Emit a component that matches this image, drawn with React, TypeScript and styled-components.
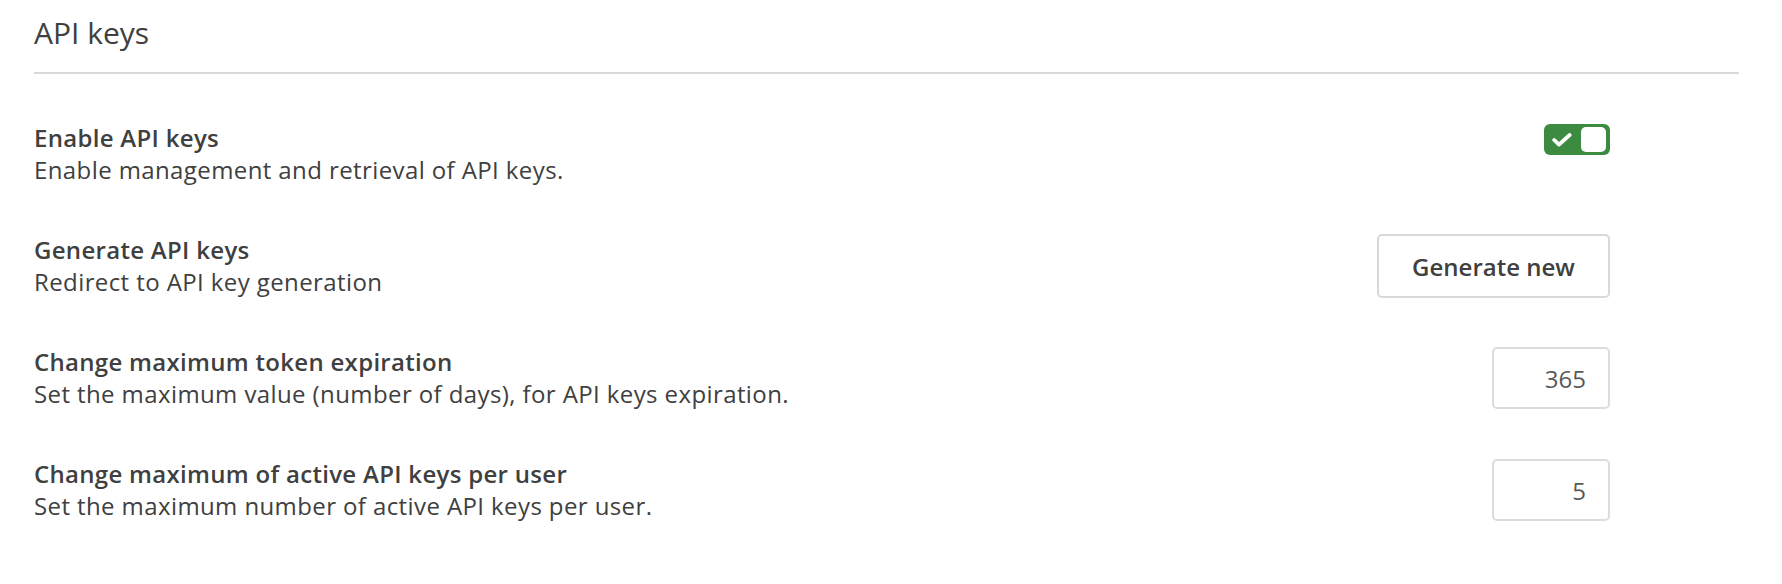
import React, { useState } from "react";
import styled, { createGlobalStyle } from "styled-components";

const GlobalStyle = createGlobalStyle`
  html, body {
    margin: 0;
    padding: 0;
    background: #ffffff;
  }
  body {
    font-family: "Source Sans Pro", "Open Sans", "Liberation Sans", sans-serif;
    color: #404040;
  }
`;

const Page = styled.div`
  width: 1705px;
  padding-left: 34px;
`;

const Header = styled.div`
  padding: 14px 0 20px;
  border-bottom: 2px solid #d9d9d9;
`;

const Title = styled.h1`
  margin: 0;
  font-size: 30px;
  line-height: 38px;
  font-weight: 400;
  color: #404040;
`;

const List = styled.div`
  display: flex;
  flex-direction: column;
  gap: 48px;
  padding: 48px 129px 0 0;
`;

const Row = styled.div<{ $align?: string }>`
  display: flex;
  justify-content: space-between;
  align-items: ${(p) => p.$align || "center"};
`;

const TextBlock = styled.div`
  display: flex;
  flex-direction: column;
`;

const Label = styled.div`
  font-size: 24px;
  line-height: 32px;
  font-weight: 600;
  letter-spacing: 0.3px;
  color: #404040;
`;

const Description = styled.div`
  font-size: 24px;
  line-height: 32px;
  letter-spacing: 0.4px;
  color: #404040;
`;

const Switch = styled.button<{ $on: boolean }>`
  display: flex;
  align-items: center;
  justify-content: space-between;
  box-sizing: border-box;
  width: 66px;
  height: 31px;
  margin-top: 2px;
  padding: 0 4px 0 8px;
  border: none;
  border-radius: 6px;
  background: ${(p) => (p.$on ? "#3d8a41" : "#bdbdbd")};
  cursor: pointer;
`;

const Knob = styled.span`
  display: block;
  width: 25px;
  height: 25px;
  border-radius: 5px;
  background: #ffffff;
`;

const GenerateButton = styled.button`
  box-sizing: border-box;
  width: 233px;
  height: 64px;
  border: 2px solid #d9d9d9;
  border-radius: 5px;
  background: #ffffff;
  font-family: inherit;
  font-size: 24px;
  font-weight: 600;
  color: #404040;
  cursor: pointer;
`;

const NumberInput = styled.input`
  box-sizing: border-box;
  width: 118px;
  height: 62px;
  padding: 0 22px 0 12px;
  border: 2px solid #dcdcdc;
  border-radius: 5px;
  background: #ffffff;
  font-family: inherit;
  font-size: 24px;
  color: #595959;
  text-align: right;
  outline: none;
`;

const CheckIcon = () => (
  <svg width="20" height="14" viewBox="0 0 20 14" fill="none">
    <path
      d="M2.2 7 L7 11.6 L17.6 2"
      stroke="#ffffff"
      strokeWidth="3.8"
      strokeLinecap="round"
      strokeLinejoin="round"
    />
  </svg>
);

const App: React.FC = () => {
  const [enabled, setEnabled] = useState(true);
  const [expiration, setExpiration] = useState("365");
  const [maxKeys, setMaxKeys] = useState("5");

  return (
    <>
      <GlobalStyle />
      <Page>
        <Header>
          <Title>API keys</Title>
        </Header>
        <List>
          <Row $align="flex-start">
            <TextBlock>
              <Label>Enable API keys</Label>
              <Description>Enable management and retrieval of API keys.</Description>
            </TextBlock>
            <Switch
              role="switch"
              aria-checked={enabled}
              $on={enabled}
              onClick={() => setEnabled(!enabled)}
            >
              {enabled ? <CheckIcon /> : <span />}
              <Knob />
            </Switch>
          </Row>
          <Row>
            <TextBlock>
              <Label>Generate API keys</Label>
              <Description>Redirect to API key generation</Description>
            </TextBlock>
            <GenerateButton>Generate new</GenerateButton>
          </Row>
          <Row>
            <TextBlock>
              <Label>Change maximum token expiration</Label>
              <Description>
                Set the maximum value (number of days), for API keys expiration.
              </Description>
            </TextBlock>
            <NumberInput
              value={expiration}
              onChange={(e) => setExpiration(e.target.value)}
            />
          </Row>
          <Row>
            <TextBlock>
              <Label>Change maximum of active API keys per user</Label>
              <Description>Set the maximum number of active API keys per user.</Description>
            </TextBlock>
            <NumberInput value={maxKeys} onChange={(e) => setMaxKeys(e.target.value)} />
          </Row>
        </List>
      </Page>
    </>
  );
};

export default App;
